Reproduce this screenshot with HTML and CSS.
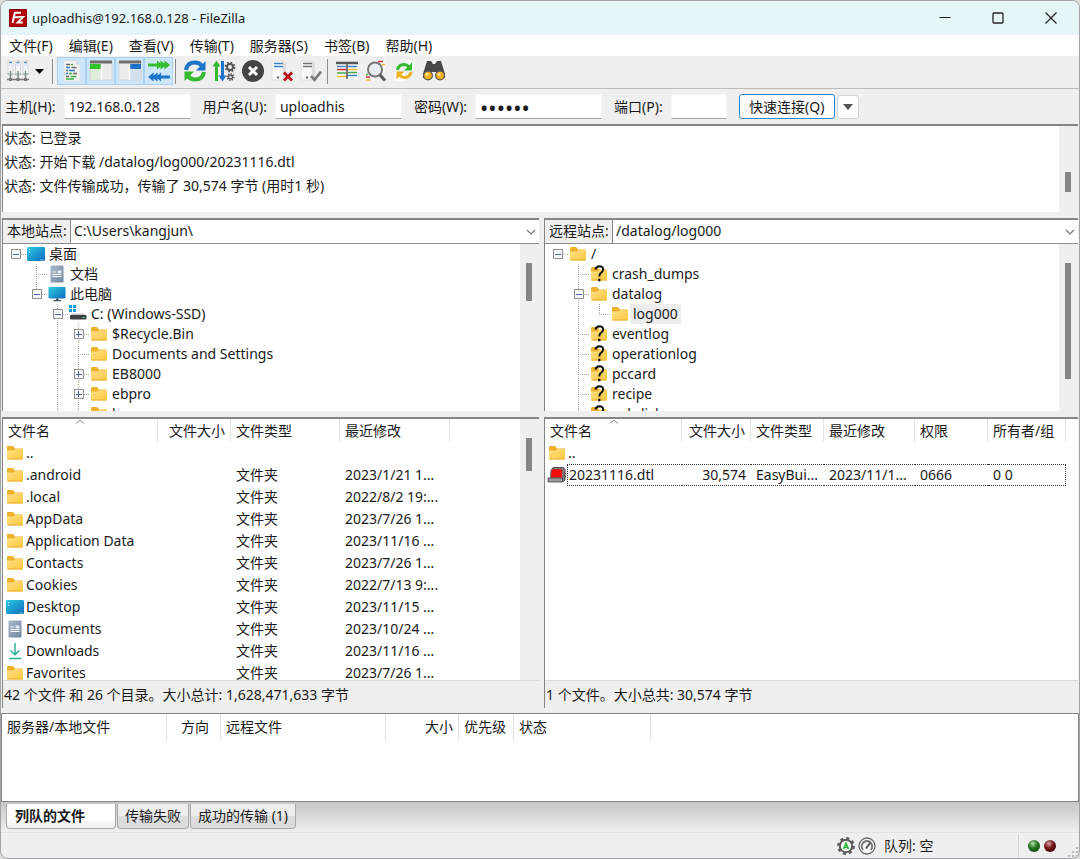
FILE: index.html
```
<!DOCTYPE html>
<html lang="zh-CN">
<head>
    <meta charset="UTF-8">
    <meta name="viewport" content="width=device-width, initial-scale=1.0">
    <title>uploadhis@192.168.0.128 - FileZilla</title>
    <link rel="stylesheet" href="styles.css">
</head>
<body>

<!-- shared icons -->
<svg class="sprite" width="0" height="0" aria-hidden="true">
    <defs>
        <linearGradient id="gFolder" x1="0" y1="0" x2="1" y2="1">
            <stop offset="0" stop-color="#ffe08a"/>
            <stop offset="1" stop-color="#fbc73c"/>
        </linearGradient>
        <linearGradient id="gBlue" x1="0" y1="0" x2="1" y2="1">
            <stop offset="0" stop-color="#2fcbe0"/>
            <stop offset="1" stop-color="#0b6cbf"/>
        </linearGradient>
        <linearGradient id="gDoc" x1="0" y1="0" x2="1" y2="1">
            <stop offset="0" stop-color="#a9b9cc"/>
            <stop offset="1" stop-color="#71879f"/>
        </linearGradient>
        <radialGradient id="gGreen" cx="0.4" cy="0.3" r="0.7">
            <stop offset="0" stop-color="#b5dcb0"/>
            <stop offset="0.5" stop-color="#2b7d24"/>
            <stop offset="1" stop-color="#0d4a0a"/>
        </radialGradient>
        <radialGradient id="gRed" cx="0.4" cy="0.3" r="0.7">
            <stop offset="0" stop-color="#dcaaaa"/>
            <stop offset="0.5" stop-color="#7d1c1f"/>
            <stop offset="1" stop-color="#430709"/>
        </radialGradient>
        <symbol id="folder" viewBox="0 0 20 18">
            <path d="M2 4.500V3.200Q2 2 3.200 2H8l2 2.500h7Q18 4.500 18 5.500V8H2z" fill="#eeb12c"/>
            <path d="M2 6.500H8.500L10.500 5H17Q18 5 18 6V14.500Q18 15.500 17 15.500H3Q2 15.500 2 14.500z" fill="url(#gFolder)"/>
            <path d="M2.500 15h15" stroke="#e9b234"/>
        </symbol>
        <symbol id="unknown" viewBox="0 0 20 18">
            <use href="#folder" width="20" height="18"/>
            <path d="M6.500 4.500Q7 1.500 10.500 1.300Q14.300 1.400 14.200 4.500Q14 6.500 11.800 8Q10.300 9.200 10.300 11.500" fill="none" stroke="#111" stroke-width="2"/>
            <rect x="9.200" y="13.700" width="2.200" height="2.600" fill="#111"/>
        </symbol>
        <symbol id="desktop" viewBox="0 0 20 18">
            <rect x="1" y="2" width="18" height="14" rx="1.200" fill="url(#gBlue)"/>
            <path d="M3 4.500h1.200M3 7h1.200" stroke="#d5f8ff"/>
            <path d="M14.500 15h3.500" stroke="#d5f8ff" stroke-dasharray="1 1"/>
        </symbol>
        <symbol id="document" viewBox="0 0 20 18">
            <rect x="3.500" y="0.500" width="13" height="17" rx="1" fill="url(#gDoc)"/>
            <path d="M5.500 7h3.500M5.500 9.500h9M5.500 11.500h9" stroke="#fff"/>
            <rect x="10.500" y="5.500" width="4" height="2.800" fill="#e5edf5"/>
        </symbol>
        <symbol id="computer" viewBox="0 0 20 18">
            <rect x="1.500" y="2" width="17" height="11.500" rx="1" fill="url(#gBlue)"/>
            <path d="M9 13.500h2.500V15H14v1.200H6.500V15H9z" fill="#3d5261"/>
        </symbol>
        <symbol id="drive" viewBox="0 0 20 18">
            <path d="M1 0h3v3H1zM5 0h3v3H5zM1 4h3v3H1zM5 4h3v3H5z" fill="#1697e0"/>
            <path d="M4 8.500h12l2 2.500H2z" fill="#c2c6c9"/>
            <rect x="2" y="10" width="16.500" height="4.500" rx="1" fill="#3c4145"/>
            <rect x="14.500" y="12" width="2" height="1" fill="#62e07b"/>
        </symbol>
        <symbol id="download" viewBox="0 0 20 18">
            <path d="M10 1v11.500M5.500 8.500l4.500 4.300l4.500-4.300M4 16.500h12.500" fill="none" stroke="#2fae95" stroke-width="1.500"/>
        </symbol>
        <symbol id="datafile" viewBox="0 0 20 18">
            <path d="M4 4.500L6 1.500H16.500L18 3.500V14L16.500 15.500H3.500z" fill="#7f7f7f" stroke="#333" stroke-width="0.800"/>
            <path d="M4.500 5L5.500 3.200H15.200V11.500H4z" fill="#f40b0b"/>
            <path d="M1 12H15.500V16H1z" fill="#9a9a9a" stroke="#444" stroke-width="0.800"/>
            <path d="M17.500 7l1.800 1M17.500 10l1.800 1" stroke="#333"/>
        </symbol>
    </defs>
</svg>

<div class="window">

    <header class="titlebar">
        <svg class="logo" width="18" height="18" viewBox="0 0 18 18" aria-hidden="true">
            <rect width="18" height="18" rx="1" fill="#b3060b"/>
            <rect x="0.500" y="0.500" width="17" height="17" rx="1" fill="none" stroke="#8a0407"/>
            <path d="M3.500 14L5.800 3.800H12M4.800 8.300h4.700" fill="none" stroke="#fff" stroke-width="2"/>
            <path d="M9 7.800h5.300L8.500 13.500h5.300" fill="none" stroke="#fff" stroke-width="1.800"/>
        </svg>
        <h1>uploadhis@192.168.0.128 - FileZilla</h1>
        <div class="window-buttons">
            <button aria-label="最小化"><svg width="12" height="12" viewBox="0 0 12 12"><path d="M0.500 5.500h11" stroke="#222"/></svg></button>
            <button aria-label="最大化"><svg width="12" height="12" viewBox="0 0 12 12"><rect x="1" y="1" width="10" height="10" rx="1" fill="none" stroke="#222" stroke-width="1.300"/></svg></button>
            <button aria-label="关闭"><svg width="12" height="12" viewBox="0 0 12 12"><path d="M0.500 0.500l11 11M11.500 0.500l-11 11" stroke="#222" stroke-width="1.200"/></svg></button>
        </div>
    </header>

    <nav class="menubar">
        <button>文件(F)</button>
        <button>编辑(E)</button>
        <button>查看(V)</button>
        <button>传输(T)</button>
        <button>服务器(S)</button>
        <button>书签(B)</button>
        <button>帮助(H)</button>
    </nav>

    <div class="toolbar">
        <button class="tool" aria-label="站点管理器">
            <svg width="24" height="24" viewBox="0 0 24 24">
                <path d="M2 2h5v14H2zM9.500 2h5v14h-5zM17 2h5v14h-5z" fill="#f7f7f7" stroke="#cfd3d6" stroke-width="0.800"/>
                <path d="M3 3.500h3M10.500 3.500h3M18 3.500h3" stroke="#4a8fd2" stroke-width="1.300"/>
                <path d="M3 6h3M10.500 6h3M18 6h3" stroke="#b9d5ee"/>
                <path d="M4.500 12v7M12 12v7M19.500 12v7" stroke="#6f8479" stroke-width="1.300"/>
                <path d="M1.500 15h6M9 15h6M16.500 15h6" stroke="#88a092"/>
                <path d="M1 20.500h22" stroke="#777" stroke-width="1.500"/>
                <path d="M3 19h3v3H3zM10.500 19h3v3h-3zM18 19h3v3h-3z" fill="#777"/>
            </svg>
        </button>
        <button class="tool-drop" aria-label="站点列表"><svg width="9" height="5" viewBox="0 0 9 5"><path d="M0 0h9L4.500 5z"/></svg></button>
        <span class="tool-sep"></span>
        <button class="tool active" aria-label="消息日志">
            <svg width="24" height="24" viewBox="0 0 24 24">
                <path d="M4 2h12l4 4v16H4z" fill="#f4f4f4" stroke="#ddd" stroke-width="0.800"/>
                <path d="M16 2v4h4" fill="#ddd"/>
                <path d="M6 5.500h4M11.500 8.500h5M6 11.500h2M13 14.500h4M6 17.500h3" stroke="#666" stroke-width="1.500"/>
                <path d="M6 8.500h4M9 11.500h6M6 14.500h2" stroke="#2477ce" stroke-width="1.500"/>
                <path d="M11 5.500h2M9 14.500h3M10.500 17.500h6M6 20h8" stroke="#38b83c" stroke-width="1.500"/>
            </svg>
        </button>
        <button class="tool active" aria-label="本地目录树">
            <svg width="24" height="24" viewBox="0 0 24 24">
                <rect x="1" y="2" width="22" height="19" fill="#ececea" stroke="#d0d0d0" stroke-width="0.800"/>
                <path d="M1 3h22" stroke="#6e6e6e" stroke-width="3"/>
                <rect x="1" y="5" width="11" height="5" fill="#31c52b"/>
                <path d="M12.500 5v16" stroke="#fff" stroke-width="1.500"/>
                <rect x="2" y="10.500" width="9.500" height="10" fill="#ddeedd"/>
            </svg>
        </button>
        <button class="tool active" aria-label="远程目录树">
            <svg width="24" height="24" viewBox="0 0 24 24">
                <rect x="1" y="2" width="22" height="19" fill="#ececea" stroke="#d0d0d0" stroke-width="0.800"/>
                <path d="M1 3h22" stroke="#6e6e6e" stroke-width="3"/>
                <rect x="12" y="5" width="11" height="5" fill="#1b70c7"/>
                <path d="M11.500 5v16" stroke="#fff" stroke-width="1.500"/>
                <rect x="12.500" y="10.500" width="9.500" height="10" fill="#d2dfec"/>
            </svg>
        </button>
        <button class="tool active" aria-label="传输队列">
            <svg width="24" height="24" viewBox="0 0 24 24">
                <path d="M1 4.500h9V1.500l3.500 3V1.500l4 3V1.500l5.500 4.500-5.500 4.500v-3l-4 3v-3L10 10.500v-3H1z" fill="#31bd2d"/>
                <path d="M23 16.500h-9v-3l-3.500 3v-3l-4 3v-3L1 18l5.500 4.500v-3l4 3v-3l3.500 3v-3h9z" fill="#1b74ca"/>
            </svg>
        </button>
        <span class="tool-sep"></span>
        <button class="tool" aria-label="刷新">
            <svg width="24" height="24" viewBox="0 0 24 24">
                <path d="M3 11Q4 3.500 12 3.500Q16.500 3.500 19 7" fill="none" stroke="#1d75c9" stroke-width="4"/>
                <path d="M22.500 2v9.500H13z" fill="#1d75c9"/>
                <path d="M21 13Q20 20.500 12 20.500Q7.500 20.500 5 17" fill="none" stroke="#32b92d" stroke-width="4"/>
                <path d="M1.500 22v-9.500H11z" fill="#32b92d"/>
            </svg>
        </button>
        <button class="tool" aria-label="处理队列">
            <svg width="24" height="24" viewBox="0 0 24 24">
                <path d="M4.500 22V6" stroke="#32b92d" stroke-width="3"/><path d="M0.500 7.500L4.500 1.500l4 6z" fill="#32b92d"/>
                <path d="M10.500 2v16" stroke="#1d75c9" stroke-width="3"/><path d="M6.500 16.500l4 6 4-6z" fill="#1d75c9"/>
                <circle cx="18" cy="8" r="3" fill="none" stroke="#555" stroke-width="2"/>
                <circle cx="18" cy="8" r="4.600" fill="none" stroke="#555" stroke-width="1.600" stroke-dasharray="1.800 1.800"/>
                <circle cx="18.500" cy="18" r="2" fill="none" stroke="#555" stroke-width="1.500"/>
                <circle cx="18.500" cy="18" r="3.400" fill="none" stroke="#555" stroke-width="1.300" stroke-dasharray="1.300 1.300"/>
            </svg>
        </button>
        <button class="tool" aria-label="取消">
            <svg width="24" height="24" viewBox="0 0 24 24">
                <circle cx="12" cy="12" r="11" fill="#454545"/>
                <path d="M8 8l8 8M16 8l-8 8" stroke="#fff" stroke-width="3"/>
            </svg>
        </button>
        <button class="tool" aria-label="断开">
            <svg width="24" height="24" viewBox="0 0 24 24">
                <path d="M2 2h11v19H2z" fill="#f8f8f8" stroke="#ddd" stroke-width="0.800"/>
                <path d="M13 2l3 2v17h-3z" fill="#dcdcdc"/>
                <path d="M4 4.500h9M4 7.500h9" stroke="#3b82cc" stroke-width="1.600"/>
                <circle cx="8" cy="18.500" r="1.200" fill="#777"/>
                <path d="M14 13.500l8 8M22 13.500l-8 8" stroke="#bb151b" stroke-width="2.800"/>
            </svg>
        </button>
        <button class="tool" aria-label="重新连接">
            <svg width="24" height="24" viewBox="0 0 24 24">
                <path d="M2 2h11v19H2z" fill="#f8f8f8" stroke="#ddd" stroke-width="0.800"/>
                <path d="M13 2l3 2v17h-3z" fill="#dcdcdc"/>
                <path d="M4 4.500h9M4 7.500h9" stroke="#707070" stroke-width="1.600"/>
                <circle cx="8" cy="18.500" r="1.200" fill="#777"/>
                <path d="M12 17l3.500 4 6.500-8.500" fill="none" stroke="#777" stroke-width="2.600"/>
            </svg>
        </button>
        <span class="tool-sep"></span>
        <button class="tool" aria-label="筛选">
            <svg width="24" height="24" viewBox="0 0 24 24">
                <rect x="2" y="3" width="20" height="17" fill="#fafafa"/>
                <path d="M1 4h22" stroke="#555" stroke-width="2.500"/>
                <path d="M2 7.500h9M13 7.500h9M13 16.500h9" stroke="#3b82cc" stroke-width="1.400"/>
                <path d="M2 10.500h9" stroke="#d22b2f" stroke-width="1.500"/>
                <path d="M2 14h9M13 13.500h9" stroke="#48a64b" stroke-width="1.500"/>
                <path d="M2 17.500h9M13 10.500h9" stroke="#ecb827" stroke-width="1.500"/>
                <path d="M12 3v17" stroke="#555" stroke-width="1.600"/>
            </svg>
        </button>
        <button class="tool" aria-label="比较目录">
            <svg width="24" height="24" viewBox="0 0 24 24">
                <path d="M12 1h9v12h-9zM2 10h9v12H2z" fill="#fafafa"/>
                <path d="M14 2.500h5M2 18h4" stroke="#d22b2f" stroke-width="1.500"/>
                <path d="M18 5.500h3M2 21h5" stroke="#ecb827" stroke-width="1.500"/>
                <path d="M2 15.500h2" stroke="#48a64b" stroke-width="1.500"/>
                <circle cx="11" cy="10.500" r="7" fill="#e6edf2" stroke="#777" stroke-width="2"/>
                <path d="M16 16l5 5.500" stroke="#555" stroke-width="3"/>
            </svg>
        </button>
        <button class="tool" aria-label="同步浏览">
            <svg width="24" height="24" viewBox="0 0 24 24">
                <path d="M13 1h9v10h-9zM1 13h11v9H1z" fill="#fafafa"/>
                <path d="M4.500 11Q5.500 5.500 11 5.500Q14 5.500 16 8" fill="none" stroke="#32b92d" stroke-width="3"/>
                <path d="M19 3.500v8h-8z" fill="#32b92d"/>
                <path d="M18 13Q17 18.500 11.500 18.500Q8.500 18.500 6.500 16" fill="none" stroke="#ecb220" stroke-width="3"/>
                <path d="M3.500 20.500v-8h8z" fill="#ecb220"/>
            </svg>
        </button>
        <button class="tool" aria-label="搜索文件">
            <svg width="24" height="24" viewBox="0 0 24 24">
                <path d="M5 2h4l2 3h2l2-3h4l4 13v4H14v-6h-4v6H1v-4z" fill="#484848"/>
                <circle cx="6" cy="16.500" r="5" fill="#555"/>
                <circle cx="18" cy="16.500" r="5" fill="#555"/>
                <circle cx="6" cy="16.500" r="3.800" fill="#f4b01c"/>
                <circle cx="18" cy="16.500" r="3.800" fill="#f4b01c"/>
                <circle cx="5" cy="15.300" r="1.500" fill="#ffe08c"/>
                <circle cx="17" cy="15.300" r="1.500" fill="#ffe08c"/>
            </svg>
        </button>
    </div>

    <form class="quickconnect">
        <label for="host">主机(H):</label>
        <input class="wide" id="host" type="text" value="192.168.0.128">
        <label for="user">用户名(U):</label>
        <input class="wide" id="user" type="text" value="uploadhis">
        <label for="pass">密码(W):</label>
        <input class="wide" id="pass" type="password" value="111111">
        <label for="port">端口(P):</label>
        <input class="port" id="port" type="text">
        <button class="connect" type="button">快速连接(Q)</button>
        <button class="history" type="button" aria-label="历史记录"><svg width="10" height="6" viewBox="0 0 10 6"><path d="M0 0h10L5 6z" fill="#555"/></svg></button>
    </form>

    <section class="log">
        <div class="log-lines">
            <p>状态: 已登录</p>
            <p>状态: 开始下载 /datalog/log000/20231116.dtl</p>
            <p>状态: 文件传输成功，传输了 30,574 字节 (用时1 秒)</p>
        </div>
        <div class="scrollbar scroll-log"><div class="thumb"></div></div>
    </section>

    <div class="split split-trees">
        <section class="pane pane-local">
            <div class="address">
                <label for="local">本地站点:</label>
                <select id="local"><option>C:\Users\kangjun\</option></select>
                <svg width="10" height="6" viewBox="0 0 10 6"><path d="M1 1l4 4 4-4" fill="none" stroke="#777" stroke-width="1.200"/></svg>
            </div>
            <div class="pane-body">
                <ul class="tree">
                    <li><i class="box root"><b class="toggle"></b></i><svg class="icon"><use href="#desktop"/></svg><span>桌面</span></li>
                    <li><i></i><i class="tee"></i><svg class="icon"><use href="#document"/></svg><span>文档</span></li>
                    <li><i></i><i class="box last"><b class="toggle"></b></i><svg class="icon"><use href="#computer"/></svg><span>此电脑</span></li>
                    <li><i></i><i></i><i class="box"><b class="toggle"></b></i><svg class="icon"><use href="#drive"/></svg><span>C: (Windows-SSD)</span></li>
                    <li><i></i><i></i><i class="line"></i><i class="box"><b class="toggle plus"></b></i><svg class="icon"><use href="#folder"/></svg><span>$Recycle.Bin</span></li>
                    <li><i></i><i></i><i class="line"></i><i class="tee"></i><svg class="icon"><use href="#folder"/></svg><span>Documents and Settings</span></li>
                    <li><i></i><i></i><i class="line"></i><i class="box"><b class="toggle plus"></b></i><svg class="icon"><use href="#folder"/></svg><span>EB8000</span></li>
                    <li><i></i><i></i><i class="line"></i><i class="box"><b class="toggle plus"></b></i><svg class="icon"><use href="#folder"/></svg><span>ebpro</span></li>
                    <li><i></i><i></i><i class="line"></i><i class="tee"></i><svg class="icon"><use href="#folder"/></svg><span>home</span></li>
                </ul>
                <div class="scrollbar scroll-local-tree"><div class="thumb"></div></div>
            </div>
        </section>
        <section class="pane pane-remote">
            <div class="address">
                <label for="remote">远程站点:</label>
                <select id="remote"><option>/datalog/log000</option></select>
                <svg width="10" height="6" viewBox="0 0 10 6"><path d="M1 1l4 4 4-4" fill="none" stroke="#777" stroke-width="1.200"/></svg>
            </div>
            <div class="pane-body">
                <ul class="tree">
                    <li><i class="box root"><b class="toggle"></b></i><svg class="icon"><use href="#folder"/></svg><span>/</span></li>
                    <li><i></i><i class="tee"></i><svg class="icon"><use href="#unknown"/></svg><span>crash_dumps</span></li>
                    <li><i></i><i class="box"><b class="toggle"></b></i><svg class="icon"><use href="#folder"/></svg><span>datalog</span></li>
                    <li><i></i><i class="line"></i><i class="tee last"></i><svg class="icon"><use href="#folder"/></svg><span class="selected">log000</span></li>
                    <li><i></i><i class="tee"></i><svg class="icon"><use href="#unknown"/></svg><span>eventlog</span></li>
                    <li><i></i><i class="tee"></i><svg class="icon"><use href="#unknown"/></svg><span>operationlog</span></li>
                    <li><i></i><i class="tee"></i><svg class="icon"><use href="#unknown"/></svg><span>pccard</span></li>
                    <li><i></i><i class="tee"></i><svg class="icon"><use href="#unknown"/></svg><span>recipe</span></li>
                    <li><i></i><i class="tee"></i><svg class="icon"><use href="#unknown"/></svg><span>usbdisk</span></li>
                </ul>
                <div class="scrollbar scroll-remote-tree"><div class="thumb"></div></div>
            </div>
        </section>
    </div>

    <div class="split split-lists">
        <section class="pane pane-local">
            <div class="pane-body">
                <div class="list">
                    <table class="files local-files">
                        <colgroup><col class="c-icon"><col class="c-name"><col class="c-size"><col class="c-type"><col class="c-date"></colgroup>
                        <thead>
                            <tr>
                                <th colspan="2" class="sorted">文件名<svg class="caret" width="10" height="5" viewBox="0 0 10 5"><path d="M1 4.500L5 1l4 3.500" fill="none" stroke="#888"/></svg></th>
                                <th class="num">文件大小</th><th>文件类型</th><th>最近修改</th>
                            </tr>
                        </thead>
                        <tbody>
                            <tr><td><svg class="icon"><use href="#folder"/></svg></td><td class="name">..</td><td></td><td></td><td></td></tr>
                            <tr><td><svg class="icon"><use href="#folder"/></svg></td><td class="name">.android</td><td></td><td>文件夹</td><td>2023/1/21 1...</td></tr>
                            <tr><td><svg class="icon"><use href="#folder"/></svg></td><td class="name">.local</td><td></td><td>文件夹</td><td>2022/8/2 19:...</td></tr>
                            <tr><td><svg class="icon"><use href="#folder"/></svg></td><td class="name">AppData</td><td></td><td>文件夹</td><td>2023/7/26 1...</td></tr>
                            <tr><td><svg class="icon"><use href="#folder"/></svg></td><td class="name">Application Data</td><td></td><td>文件夹</td><td>2023/11/16 ...</td></tr>
                            <tr><td><svg class="icon"><use href="#folder"/></svg></td><td class="name">Contacts</td><td></td><td>文件夹</td><td>2023/7/26 1...</td></tr>
                            <tr><td><svg class="icon"><use href="#folder"/></svg></td><td class="name">Cookies</td><td></td><td>文件夹</td><td>2022/7/13 9:...</td></tr>
                            <tr><td><svg class="icon"><use href="#desktop"/></svg></td><td class="name">Desktop</td><td></td><td>文件夹</td><td>2023/11/15 ...</td></tr>
                            <tr><td><svg class="icon"><use href="#document"/></svg></td><td class="name">Documents</td><td></td><td>文件夹</td><td>2023/10/24 ...</td></tr>
                            <tr><td><svg class="icon"><use href="#download"/></svg></td><td class="name">Downloads</td><td></td><td>文件夹</td><td>2023/11/16 ...</td></tr>
                            <tr><td><svg class="icon"><use href="#folder"/></svg></td><td class="name">Favorites</td><td></td><td>文件夹</td><td>2023/7/26 1...</td></tr>
                        </tbody>
                    </table>
                </div>
                <div class="scrollbar scroll-local-list"><div class="thumb"></div></div>
            </div>
            <p class="summary">42 个文件 和 26 个目录。大小总计: 1,628,471,633 字节</p>
        </section>
        <section class="pane pane-remote">
            <div class="pane-body">
                <div class="list">
                    <table class="files remote-files">
                        <colgroup><col class="c-icon"><col class="c-name"><col class="c-size"><col class="c-type"><col class="c-date"><col class="c-perm"><col class="c-owner"></colgroup>
                        <thead>
                            <tr>
                                <th colspan="2" class="sorted">文件名<svg class="caret" width="10" height="5" viewBox="0 0 10 5"><path d="M1 4.500L5 1l4 3.500" fill="none" stroke="#888"/></svg></th>
                                <th class="num">文件大小</th><th>文件类型</th><th>最近修改</th><th>权限</th><th>所有者/组</th>
                            </tr>
                        </thead>
                        <tbody>
                            <tr><td><svg class="icon"><use href="#folder"/></svg></td><td class="name">..</td><td></td><td></td><td></td><td></td><td></td></tr>
                            <tr class="focused"><td><svg class="icon"><use href="#datafile"/></svg></td><td class="name">20231116.dtl</td><td class="num">30,574</td><td>EasyBui...</td><td>2023/11/1...</td><td>0666</td><td>0 0</td></tr>
                        </tbody>
                    </table>
                </div>
            </div>
            <p class="summary">1 个文件。大小总共: 30,574 字节</p>
        </section>
    </div>

    <section class="queue">
        <table class="files queue-files">
            <colgroup><col class="q-server"><col class="q-dir"><col class="q-remote"><col class="q-size"><col class="q-prio"><col class="q-state"></colgroup>
            <thead>
                <tr><th>服务器/本地文件</th><th class="center">方向</th><th>远程文件</th><th class="num">大小</th><th>优先级</th><th>状态</th></tr>
            </thead>
        </table>
    </section>

    <div class="tabs">
        <button class="tab current">列队的文件</button>
        <button class="tab">传输失败</button>
        <button class="tab">成功的传输 (1)</button>
    </div>

    <footer class="statusbar">
        <svg width="18" height="18" viewBox="0 0 18 18" aria-hidden="true">
            <circle cx="9" cy="9" r="7.800" fill="none" stroke="#5a5a5a" stroke-width="2.200" stroke-dasharray="3.100 3.026"/>
            <circle cx="9" cy="9" r="6.200" fill="#fff" stroke="#5a5a5a" stroke-width="2"/>
            <path d="M6.500 12L9 6l2.500 6M7.300 10.200h3.400" fill="none" stroke="#2fb43a" stroke-width="1.600"/>
        </svg>
        <svg width="18" height="18" viewBox="0 0 18 18" aria-hidden="true">
            <circle cx="9" cy="9" r="8" fill="#f8f8f8" stroke="#666" stroke-width="1.300"/>
            <path d="M5 13Q2.800 10 4.200 7Q6 4 9 4Q12 4 13.600 7Q15 10 13 13" fill="none" stroke="#777" stroke-width="1.800"/>
            <path d="M8 11.500L12 6" stroke="#555" stroke-width="2"/>
        </svg>
        <span class="queue-state">队列: 空</span>
        <div class="leds">
            <svg width="14" height="14" viewBox="0 0 14 14"><circle cx="7" cy="7" r="6" fill="url(#gGreen)"/></svg>
            <svg width="14" height="14" viewBox="0 0 14 14"><circle cx="7" cy="7" r="6" fill="url(#gRed)"/></svg>
        </div>
        <svg class="grip" width="11" height="11" viewBox="0 0 11 11"><path d="M8 0h2v2H8zM8 4h2v2H8zM4 4h2v2H4zM0 8h2v2H0zM4 8h2v2H4zM8 8h2v2H8z" fill="#b5b5b5"/></svg>
    </footer>

</div>

</body>
</html>
```
FILE: styles.css
```
* {
    box-sizing: border-box;
}

body {
    margin: 0;
    background-color: #dcdcdc;
    color: #1a1a1a;
    font-family: "Noto Sans", "Noto Sans CJK SC", sans-serif;
    font-size: 14px;
    line-height: 20px;
}

button,
input,
select {
    font: inherit;
    color: inherit;
    margin: 0;
}

button {
    display: flex;
    align-items: center;
    justify-content: center;
    padding: 0;
    border: none;
    background: none;
    white-space: nowrap;
}

p,
h1,
ul {
    margin: 0;
    padding: 0;
}

svg {
    display: block;
    flex-shrink: 0;
}

.sprite {
    position: absolute;
}

.icon {
    width: 20px;
    height: 18px;
}

.window {
    display: flex;
    flex-direction: column;
    height: 100vh;
    border: 1px solid #a2a4a5;
    border-radius: 8px;
    background-color: #efefef;
    overflow: hidden;
}

/* title and menu */
.titlebar {
    display: flex;
    align-items: center;
    flex: 0 0 34px;
    padding: 0 2px 0 8px;
    background-color: #e4f6f8;
}

.titlebar h1 {
    flex: 1;
    margin-left: 5px;
    font-size: 13px;
    font-weight: normal;
}

.window-buttons {
    display: flex;
}

.window-buttons button {
    width: 53px;
    height: 34px;
}

.menubar {
    display: flex;
    flex: 0 0 21px;
    background-color: #fff;
}

.menubar button {
    padding: 0 8px;
}

/* toolbar */
.toolbar {
    display: flex;
    align-items: center;
    flex: 0 0 33px;
    padding: 0 2px 2px;
    border-bottom: 1px solid #bcbcbc;
}

.tool {
    width: 29px;
    height: 28px;
}

.tool.active {
    border: 1px solid #a9d3f5;
    background-color: #cde6fa;
}

.tool-drop {
    width: 15px;
    height: 28px;
    margin-right: 3px;
}

.tool-sep {
    width: 1px;
    height: 25px;
    margin: 0 4px 0 2px;
    background-color: #8d8d8d;
}

/* quick connect */
.quickconnect {
    display: flex;
    align-items: center;
    flex: 0 0 35px;
    padding: 0 4px;
}

.quickconnect label {
    margin-right: 8px;
    white-space: nowrap;
}

.quickconnect input {
    height: 25px;
    margin-right: 12px;
    padding: 0 4px;
    border: 1px solid #f4f4f4;
    border-bottom: 1px solid #a5a5a5;
    background-color: #fff;
    outline: none;
}

.quickconnect .wide {
    width: 127px;
}

.quickconnect input[type="password"] {
    font-size: 22px;
}

.quickconnect .port {
    width: 56px;
}

.connect {
    width: 96px;
    height: 25px;
    margin-right: 2px;
    border: 1px solid #2a86cc;
    border-radius: 3px;
    background-color: #fdfdfd;
}

.history {
    width: 22px;
    height: 24px;
    border: 1px solid #d4d4d4;
    border-radius: 3px;
    background-color: #fdfdfd;
}

/* scrollbars */
.scrollbar {
    flex: 0 0 19px;
    padding-left: 6px;
    background-color: #efefef;
}

.thumb {
    width: 6px;
    background-color: #858585;
}

.scroll-log {
    padding-top: 46px;
}

.scroll-log .thumb {
    height: 20px;
}

.scroll-local-tree,
.scroll-remote-tree {
    padding-top: 19px;
}

.scroll-local-tree .thumb {
    height: 38px;
}

.scroll-remote-tree .thumb {
    height: 116px;
}

.scroll-local-list {
    padding-top: 19px;
}

.scroll-local-list .thumb {
    height: 33px;
}

/* message log */
.log {
    display: flex;
    flex: 87 1 0;
    min-height: 0;
    margin: 0 1px 6px;
    border-top: 2px solid #858585;
    border-left: 1px solid #858585;
    background-color: #fff;
    overflow: hidden;
}

.log-lines {
    flex: 1;
    padding-left: 1px;
    line-height: 24px;
}

/* local and remote panes */
.split {
    display: flex;
    gap: 5px;
    min-height: 0;
    padding: 0 1px;
}

.split-trees {
    flex: 194 1 0;
    margin-bottom: 6px;
}

.split-lists {
    flex: 292 1 0;
    margin-bottom: 5px;
}

.pane {
    display: flex;
    flex-direction: column;
    min-width: 0;
    border-top: 2px solid #858585;
    border-left: 1px solid #858585;
}

.pane-local {
    flex: 537 1 0;
}

.pane-remote {
    flex: 534 1 0;
}

.pane-body {
    display: flex;
    flex: 1;
    min-height: 0;
    background-color: #fff;
}

.address {
    display: flex;
    align-items: center;
    flex: 0 0 24px;
    padding-right: 3px;
    border-bottom: 1px solid #8c8c8c;
    background-color: #fff;
}

.address label {
    width: 68px;
    padding: 1px 0 2px 4px;
    border-right: 1px solid #858585;
    background-color: #efefef;
    white-space: nowrap;
}

.address select {
    flex: 1;
    height: 22px;
    padding: 0 3px 2px;
    border: none;
    background: none;
    appearance: none;
}

/* directory tree */
.tree {
    flex: 1;
    padding-left: 2px;
    list-style: none;
    overflow: hidden;
}

.tree li {
    display: flex;
    align-items: center;
    height: 20px;
}

.tree i {
    display: flex;
    align-items: center;
    justify-content: center;
    flex: 0 0 21px;
    height: 20px;
    background-repeat: no-repeat;
}

.tree .line {
    background-image: repeating-linear-gradient(#aaa 0 1px, transparent 1px 2px);
    background-size: 1px 20px;
    background-position: 10px 0;
}

.tree .tee,
.tree .box {
    background-image: repeating-linear-gradient(#aaa 0 1px, transparent 1px 2px), repeating-linear-gradient(90deg, #aaa 0 1px, transparent 1px 2px);
    background-size: 1px 20px, 11px 1px;
    background-position: 10px 0, 10px 10px;
}

.tree .last {
    background-size: 1px 10px, 11px 1px;
}

.tree .root {
    background-size: 0 0, 11px 1px;
}

.toggle {
    width: 10px;
    height: 10px;
    border: 1px solid #929292;
    background: linear-gradient(#4b63a7, #4b63a7) center / 6px 1px no-repeat #f5f5f5;
}

.toggle.plus {
    background: linear-gradient(#4b63a7, #4b63a7) center / 6px 1px no-repeat, linear-gradient(#4b63a7, #4b63a7) center / 1px 6px no-repeat #f5f5f5;
}

.tree span {
    padding: 0 3px;
    white-space: nowrap;
}

.tree .selected {
    background-color: #ededed;
}

/* file lists */
.list {
    flex: 1;
    min-width: 0;
    overflow: hidden;
}

.files {
    table-layout: fixed;
    border-spacing: 0;
}

.files th {
    height: 23px;
    padding: 0 5px;
    border-right: 1px solid #e3e3e3;
    font-weight: normal;
    text-align: left;
    white-space: nowrap;
}

.files td {
    height: 22px;
    padding: 0 5px;
    white-space: nowrap;
    line-height: 20px;
}

.files td:first-child {
    padding: 0 0 0 2px;
}

.files .name {
    padding: 0 0 0 1px;
}

.files .num {
    text-align: right;
}

.files .center {
    padding: 0 5px 0 14px;
}

.sorted {
    position: relative;
}

.caret {
    position: absolute;
    top: 0;
    left: 47%;
}

.files .focused td {
    border-top: 1px dotted #333;
    border-bottom: 1px dotted #333;
}

.files .focused td:first-child {
    border: none;
}

.files .focused .name {
    border-left: 1px dotted #333;
}

.files .focused td:last-child {
    border-right: 1px dotted #333;
}

.local-files {
    width: 447px;
}

.remote-files {
    width: 521px;
}

.c-icon {
    width: 22px;
}

.local-files .c-name {
    width: 133px;
}

.local-files .c-size {
    width: 73px;
}

.local-files .c-type {
    width: 109px;
}

.local-files .c-date {
    width: 110px;
}

.remote-files .c-name {
    width: 115px;
}

.remote-files .c-size {
    width: 69px;
}

.remote-files .c-type {
    width: 73px;
}

.remote-files .c-date {
    width: 91px;
}

.remote-files .c-perm {
    width: 73px;
}

.remote-files .c-owner {
    width: 78px;
}

.summary {
    flex: 0 0 26px;
    padding-left: 1px;
    border-top: 1px solid #dadada;
    line-height: 27px;
    white-space: nowrap;
}

/* transfer queue */
.queue {
    flex: 88 1 0;
    min-height: 0;
    border: 1px solid #858585;
    background-color: #fff;
    overflow: hidden;
}

.queue-files {
    width: 649px;
}

.queue-files th {
    height: 26px;
}

.q-server {
    width: 165px;
}

.q-dir {
    width: 54px;
}

.q-remote {
    width: 165px;
}

.q-size {
    width: 73px;
}

.q-prio {
    width: 55px;
}

.q-state {
    width: 137px;
}

.tabs {
    display: flex;
    flex: 0 0 31px;
    gap: 1px;
    padding: 2px 5px 3px;
    border-bottom: 1px solid #e2e2e2;
    background: linear-gradient(#c6c6c6, #efefef);
}

.tab {
    padding: 0 7px;
    border: 1px solid #a9a9a9;
    border-top: none;
    border-radius: 0 0 4px 4px;
    background: linear-gradient(#ededed 50%, #dcdcdc 50%);
}

.tab.current {
    width: 110px;
    padding-left: 8px;
    justify-content: flex-start;
    background: linear-gradient(#fff 60%, #eee);
    font-weight: bold;
}

/* status bar */
.statusbar {
    display: flex;
    align-items: center;
    justify-content: flex-end;
    flex: 0 0 25px;
    gap: 3px;
}

.queue-state {
    width: 136px;
    padding-left: 5px;
}

.leds {
    display: flex;
    align-items: center;
    gap: 2px;
    height: 24px;
    padding: 0 8px;
    border-left: 1px solid #d2d2d2;
}

.grip {
    align-self: flex-end;
}
```
